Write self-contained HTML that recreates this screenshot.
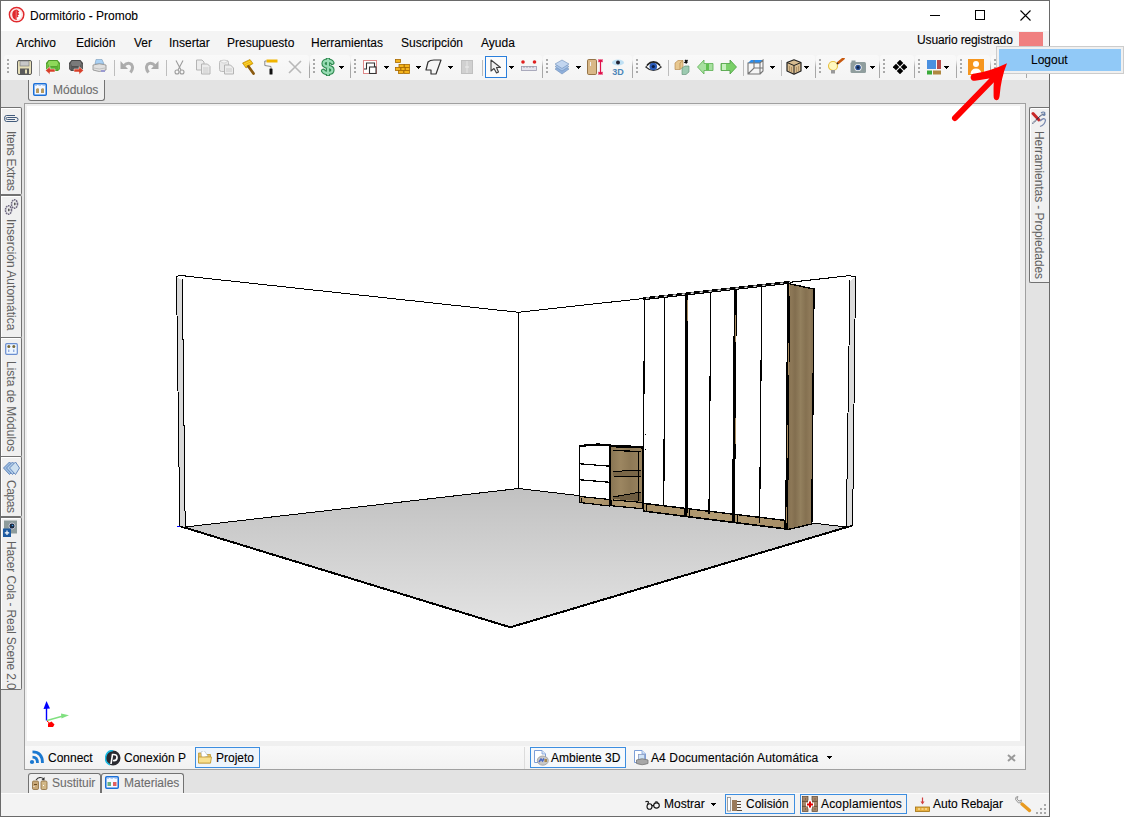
<!DOCTYPE html>
<html><head><meta charset="utf-8">
<style>
*{margin:0;padding:0;box-sizing:border-box}
html,body{width:1126px;height:832px;overflow:hidden;background:#fff;font-family:"Liberation Sans",sans-serif;font-size:12px;color:#000;position:relative}
.a{position:absolute}
.t{position:absolute;white-space:nowrap;line-height:14px;-webkit-text-stroke:0.1px currentColor}
.tb{position:absolute;top:55px;height:23px;background:linear-gradient(#f9f9f9,#f4f4f4);border-radius:3px}
.tbs{position:absolute;top:60px;width:1px;height:18px;background:linear-gradient(rgba(170,170,170,0),#a8a8a8 40%,#a8a8a8)}
.grip{position:absolute;top:59px;width:2px;height:15px;background:repeating-linear-gradient(#a9a9a9 0 2px,transparent 2px 4px)}
.sep{position:absolute;top:60px;width:1px;height:16px;background:#bdbdbd}
.dd{position:absolute;top:66px;width:5px;height:3px;background:linear-gradient(#000,#000) 0 0/5px 1px no-repeat,linear-gradient(#000,#000) 1px 1px/3px 1px no-repeat,linear-gradient(#000,#000) 2px 2px/1px 1px no-repeat}
.ic{position:absolute;top:59px;width:16px;height:16px;overflow:visible}
.ltab{position:absolute;left:1px;width:21px;background:#f0f0f0;border:1px solid #727272;border-left:none;border-radius:0 2px 2px 0;box-shadow:inset 1px 1px 0 #fff}
.vt{position:absolute;white-space:nowrap;transform-origin:0 0;transform:rotate(90deg);color:#606060;line-height:14px}
</style></head><body>
<!-- window background -->
<div class="a" style="left:0;top:0;width:1050px;height:817px;background:#e3e3e3"></div>
<!-- title bar -->
<div class="a" style="left:1px;top:1px;width:1048px;height:30px;background:#fff"></div>
<!-- menu + toolbar strip -->
<div class="a" style="left:1px;top:31px;width:1048px;height:49px;background:#f4f4f4"></div>
<!-- window border -->
<div class="a" style="left:0;top:0;width:1050px;height:817px;border:1px solid #6a6a6a"></div>

<!-- title -->
<svg class="a" style="left:8px;top:6px" width="18" height="18" viewBox="0 0 18 18">
  <circle cx="8.6" cy="8.6" r="7.2" fill="none" stroke="#e0282c" stroke-width="1.5"/>
  <circle cx="8.6" cy="8.6" r="5.6" fill="none" stroke="#f4b0b0" stroke-width="0.5"/>
  <path d="M8.8 3.6 Q4.2 3.8 4.2 8.8 Q4.4 13.6 8.8 14 L8.8 11.6 L10.6 10.8 L9.6 9.4 L11.4 8.2 L10 6.8 L11.4 5.4 Z" fill="#e0282c"/>
  <path d="M8.2 4.5 L8.2 13" stroke="#f8d0d0" stroke-width="0.5"/>
</svg>
<div class="t" style="left:30px;top:9px">Dormitório - Promob</div>
<div class="a" style="left:930px;top:15px;width:10px;height:1px;background:#000"></div>
<div class="a" style="left:975px;top:10px;width:10px;height:10px;border:1px solid #000"></div>
<svg class="a" style="left:1020px;top:10px" width="11" height="11" viewBox="0 0 11 11"><path d="M0.5 0.5L10.5 10.5M10.5 0.5L0.5 10.5" stroke="#000" stroke-width="1.1"/></svg>

<!-- menu -->
<div class="t" style="left:16px;top:36px">Archivo</div>
<div class="t" style="left:76px;top:36px">Edición</div>
<div class="t" style="left:134px;top:36px">Ver</div>
<div class="t" style="left:169px;top:36px">Insertar</div>
<div class="t" style="left:227px;top:36px">Presupuesto</div>
<div class="t" style="left:311px;top:36px">Herramientas</div>
<div class="t" style="left:401px;top:36px">Suscripción</div>
<div class="t" style="left:481px;top:36px">Ayuda</div>
<div class="t" style="left:917px;top:33px;letter-spacing:-0.13px">Usuario registrado</div>
<div class="a" style="left:1019px;top:32px;width:24px;height:14px;background:#f08080"></div>

<!-- TOOLBARS -->
<div id="toolbars">
<div class="tb" style="left:4px;width:305px"></div>
<div class="tbs" style="left:309px"></div>
<div class="grip" style="left:7px"></div>
<div class="tb" style="left:310px;width:40px"></div>
<div class="tbs" style="left:350px"></div>
<div class="grip" style="left:313px"></div>
<div class="tb" style="left:351px;width:191px"></div>
<div class="tbs" style="left:542px"></div>
<div class="grip" style="left:354px"></div>
<div class="tb" style="left:543px;width:89px"></div>
<div class="tbs" style="left:632px"></div>
<div class="grip" style="left:546px"></div>
<div class="tb" style="left:633px;width:182px"></div>
<div class="tbs" style="left:815px"></div>
<div class="grip" style="left:636px"></div>
<div class="tb" style="left:816px;width:63px"></div>
<div class="tbs" style="left:879px"></div>
<div class="grip" style="left:819px"></div>
<div class="tb" style="left:880px;width:34px"></div>
<div class="tbs" style="left:914px"></div>
<div class="grip" style="left:883px"></div>
<div class="tb" style="left:915px;width:41px"></div>
<div class="tbs" style="left:956px"></div>
<div class="grip" style="left:918px"></div>
<div class="tb" style="left:957px;width:33px"></div>
<div class="tbs" style="left:990px"></div>
<div class="grip" style="left:960px"></div>
<div class="tb" style="left:991px;width:35px"></div>
<div class="tbs" style="left:1026px"></div>
<div class="grip" style="left:994px"></div>
<div class="sep" style="left:39px"></div>
<div class="sep" style="left:114px"></div>
<div class="sep" style="left:166px"></div>
<div class="sep" style="left:482px"></div>
<div class="sep" style="left:668px"></div>
<div class="sep" style="left:743px"></div>
<div class="sep" style="left:781px"></div>
<div class="dd" style="left:339px"></div>
<div class="dd" style="left:384px"></div>
<div class="dd" style="left:416px"></div>
<div class="dd" style="left:448px"></div>
<div class="dd" style="left:509px"></div>
<div class="dd" style="left:576px"></div>
<div class="dd" style="left:770px"></div>
<div class="dd" style="left:804px"></div>
<div class="dd" style="left:870px"></div>
<div class="dd" style="left:944px"></div>
<div class="a" style="left:485px;top:56px;width:22px;height:22px;border:1px solid #2a7fdc;background:#fbfbfb"></div>
<svg class="a" style="left:17px;top:60px" width="15" height="15" viewBox="0 0 15 15"><rect x="0.5" y="0.5" width="14" height="14" rx="1.5" fill="#e6dfb8" stroke="#5b5b5b"/><rect x="3" y="1" width="9" height="5" fill="#c8c8c8" stroke="#777" stroke-width="0.6"/><rect x="3" y="8.5" width="9" height="6" fill="#5a5a5a"/><rect x="8" y="9.5" width="2" height="4" fill="#e6dfb8"/></svg>
<svg class="a" style="left:45px;top:59px" width="16" height="16" viewBox="0 0 16 16"><path d="M3.5 1 L12.5 1 L15 4 L15 10 L13 12 L3 12 L1 10 L1 4 Z" fill="#4f9a2a"/><path d="M4 2 L12 2 L13.5 4.5 L12 7 L4 7 L2.5 4.5 Z" fill="#8ed85a"/><path d="M1.5 5 L3.5 5 L3.5 11 L1.5 10 Z M12.5 5 L14.5 5 L14.5 10 L12.5 11 Z" fill="#6cc040"/><rect x="4" y="7.5" width="8" height="3.5" fill="#5cb034"/><path d="M0.5 11.5 L5 7.5 L5 10 L10 10 L10 13 L5 13 L5 15.5 Z" fill="#d8402a" stroke="#fff" stroke-width="0.5"/></svg>
<svg class="a" style="left:68px;top:59px" width="16" height="16" viewBox="0 0 16 16"><path d="M3.5 1 L12.5 1 L15 4 L15 10 L13 12 L3 12 L1 10 L1 4 Z" fill="#4a4a4a"/><path d="M4 2 L12 2 L13.5 4.5 L12 7 L4 7 L2.5 4.5 Z" fill="#7a7a7a"/><path d="M1.5 5 L3.5 5 L3.5 11 L1.5 10 Z M12.5 5 L14.5 5 L14.5 10 L12.5 11 Z" fill="#666"/><rect x="4" y="7.5" width="8" height="3.5" fill="#595959"/><path d="M15.5 11.5 L11 7.5 L11 10 L6 10 L6 13 L11 13 L11 15.5 Z" fill="#d8402a" stroke="#fff" stroke-width="0.5"/></svg>
<svg class="a" style="left:92px;top:59px" width="15" height="16" viewBox="0 0 15 16"><path d="M4 0.5 L10 0.5 L12 5 L3 5 Z" fill="#a9d1f5" stroke="#7a9ab8" stroke-width="0.6"/><path d="M1 6 Q7 3.5 14 6 L14 11 Q7 14 1 11 Z" fill="#e0e0e0" stroke="#8c8c8c" stroke-width="0.8"/><path d="M2 9 Q7 11 13 9" stroke="#aaa" stroke-width="0.6" fill="none"/><rect x="9" y="11" width="4" height="2" fill="#9a9ad0"/></svg>
<svg class="a" style="left:120px;top:59px" width="15" height="16" viewBox="0 0 15 16"><path d="M0.5 2 L0.5 10 L8 10 Z" fill="#a9a9a9"/><path d="M3.5 7 Q8 2.5 11.5 5.5 Q14 9 10.5 13.5" fill="none" stroke="#aeaeae" stroke-width="3"/></svg>
<svg class="a" style="left:143px;top:59px" width="16" height="16" viewBox="0 0 16 16"><path d="M15.5 2 L15.5 10 L8 10 Z" fill="#a9a9a9"/><path d="M12.5 7 Q8 2.5 4.5 5.5 Q2 9 5.5 13.5" fill="none" stroke="#aeaeae" stroke-width="3"/></svg>
<svg class="a" style="left:174px;top:60px" width="11" height="15" viewBox="0 0 11 15"><path d="M2 0.5 L7 10 M9 0.5 L4 10" stroke="#9c9c9c" stroke-width="1.1"/><circle cx="3" cy="12" r="2" fill="none" stroke="#9c9c9c" stroke-width="1.1"/><circle cx="8" cy="12" r="2" fill="none" stroke="#9c9c9c" stroke-width="1.1"/></svg>
<svg class="a" style="left:196px;top:59px" width="15" height="16" viewBox="0 0 15 16"><path d="M0.5 1 L6 1 L8 3 L8 11 L0.5 11 Z" fill="#ececec" stroke="#b4b4b4"/><path d="M5.5 5 L11.5 5 L14 7.5 L14 15 L5.5 15 Z" fill="#ececec" stroke="#b4b4b4"/><path d="M7 9 L12.5 9 M7 11 L12.5 11 M7 13 L12.5 13" stroke="#c4c4c4" stroke-width="0.8"/></svg>
<svg class="a" style="left:219px;top:59px" width="16" height="16" viewBox="0 0 16 16"><rect x="0.5" y="1.5" width="9" height="11" rx="2" fill="#e8e8e8" stroke="#bdbdbd"/><ellipse cx="5" cy="2.5" rx="3" ry="1.5" fill="#f4f4f4" stroke="#c4c4c4" stroke-width="0.6"/><path d="M5.5 6 L11.5 6 L14.5 9 L14.5 15 L5.5 15 Z" fill="#ececec" stroke="#b4b4b4"/><path d="M7 10 L13 10 M7 12 L13 12" stroke="#c4c4c4" stroke-width="0.8"/></svg>
<svg class="a" style="left:242px;top:59px" width="14" height="16" viewBox="0 0 14 16"><path d="M0.5 4 L8 0.5 L11 4.5 L4 9 Z" fill="#f0b800" stroke="#b08000" stroke-width="0.6"/><path d="M2 5 L8.5 2 M3 6.5 L9.5 3.5" stroke="#fde070" stroke-width="0.6"/><path d="M6.5 7.5 L11.5 14.5" stroke="#8a5a10" stroke-width="2.8" stroke-linecap="round"/></svg>
<svg class="a" style="left:264px;top:59px" width="14" height="16" viewBox="0 0 14 16"><rect x="2.5" y="0.5" width="11" height="3" fill="#f0b400"/><path d="M2.5 2 L0.8 2 L0.8 6.5 L7 7.5 L7 9.5" fill="none" stroke="#707070" stroke-width="0.8"/><rect x="5.5" y="9.5" width="3" height="6" rx="0.6" fill="#111"/></svg>
<svg class="a" style="left:288px;top:60px" width="14" height="14" viewBox="0 0 14 14"><path d="M1 1 L13 13 M13 1 L1 13" stroke="#b8b8b8" stroke-width="1.6"/></svg>
<svg class="a" style="left:320px;top:58px" width="16" height="18" viewBox="0 0 16 18"><g fill="none" stroke-linecap="round"><path d="M12.3,4.8 Q11,2.6 8,2.6 Q3.6,2.6 3.6,5.6 Q3.6,8.2 8,8.8 Q12.4,9.4 12.4,12 Q12.4,15 8,15 Q4.6,15 3.2,12.8 M8,1 L8,16.8" stroke="#2f8a50" stroke-width="4.4"/><path d="M12.3,4.8 Q11,2.6 8,2.6 Q3.6,2.6 3.6,5.6 Q3.6,8.2 8,8.8 Q12.4,9.4 12.4,12 Q12.4,15 8,15 Q4.6,15 3.2,12.8 M8,1.5 L8,16.3" stroke="#98dcb4" stroke-width="2.2"/></g></svg>
<svg class="a" style="left:363px;top:60px" width="14" height="14" viewBox="0 0 14 14"><rect x="0.5" y="0.5" width="13" height="13" fill="#fff" stroke="#e08a8a"/><path d="M1 9 L3.5 9 L3.5 3 L11.5 3 L11.5 7 L13 7" fill="none" stroke="#333" stroke-width="1.1"/><rect x="6.5" y="7" width="6.5" height="6.5" fill="#fff" stroke="#333" stroke-width="1.1"/></svg>
<svg class="a" style="left:395px;top:59px" width="15" height="16" viewBox="0 0 15 16"><g fill="#f4b41c" stroke="#a86a00" stroke-width="0.8"><rect x="0.5" y="0.5" width="5" height="3"/><rect x="4" y="5.5" width="5" height="3"/><rect x="9.5" y="5.5" width="5" height="3"/><rect x="0.5" y="8.5" width="5" height="3"/><rect x="6" y="8.5" width="4" height="3"/><rect x="10.5" y="8.5" width="4" height="3"/><rect x="3.5" y="11.5" width="5" height="3"/><rect x="9" y="11.5" width="5.5" height="3"/></g></svg>
<svg class="a" style="left:425px;top:59px" width="17" height="16" viewBox="0 0 17 16"><path d="M3 3 Q5 1 9 1 L16 1 L11 15 L6 15 L6 11 L1 11 Z" fill="#f5f5f5" stroke="#333" stroke-width="1.2" stroke-linejoin="round"/></svg>
<svg class="a" style="left:461px;top:60px" width="12" height="14" viewBox="0 0 12 14"><rect x="0.5" y="0.5" width="11" height="13" fill="#d0d0d0" stroke="#c0c0c0"/><path d="M6 1 L6 13" stroke="#e6e6e6"/><path d="M5 6 L5 8 M7 6 L7 8" stroke="#ededed"/></svg>
<svg class="a" style="left:490px;top:59px" width="12" height="15" viewBox="0 0 12 15"><path d="M1 1 L1 12 L4 9.5 L6.5 14 L8.5 13 L6.5 8.5 L10.5 8.5 Z" fill="#f0f0f0" stroke="#404040" stroke-width="1.1" stroke-linejoin="round"/></svg>
<svg class="a" style="left:521px;top:59px" width="16" height="13" viewBox="0 0 16 13"><circle cx="2" cy="3" r="1.8" fill="#e02020"/><circle cx="13.5" cy="3" r="1.8" fill="#e02020"/><rect x="0.5" y="7.5" width="15" height="4" fill="#e4e4ee" stroke="#9a9aae" stroke-width="0.8"/><path d="M3 7.5 L3 9 M6 7.5 L6 9 M9 7.5 L9 9 M12 7.5 L12 9" stroke="#777" stroke-width="0.6"/></svg>
<svg class="a" style="left:554px;top:59px" width="16" height="16" viewBox="0 0 16 16"><g stroke="#6f8fb8" stroke-width="0.6"><path d="M8 6 L15 10 L8 15 L1 10 Z" fill="#8fb0dc"/><path d="M8 3.5 L15 7.5 L8 12 L1 7.5 Z" fill="#a8c4e8"/><path d="M8 1 L15 5 L8 9.5 L1 5 Z" fill="#c2d6f0"/></g></svg>
<svg class="a" style="left:587px;top:59px" width="17" height="16" viewBox="0 0 17 16"><rect x="0.5" y="0.5" width="9" height="15" rx="1.2" fill="#d9b887" stroke="#8c6a3a" stroke-width="0.9"/><rect x="3" y="3" width="1" height="4" fill="#f0f0f0"/><path d="M13.5 1 L13.5 15 M11 1 L16 1 M11 15 L16 15 M11.5 3 L13.5 1 L15.5 3 M11.5 13 L13.5 15 L15.5 13" stroke="#e0104a" stroke-width="1.2" fill="none"/></svg>
<svg class="a" style="left:611px;top:59px" width="14" height="17" viewBox="0 0 14 17"><ellipse cx="7" cy="3.5" rx="6" ry="3" fill="#bfe0f4"/><circle cx="7" cy="3.5" r="2" fill="#223"/><text x="7" y="16" text-anchor="middle" font-family="Liberation Sans" font-weight="bold" font-size="9" fill="#4a86b8">3D</text></svg>
<svg class="a" style="left:645px;top:60px" width="17" height="14" viewBox="0 0 17 14"><path d="M0.8 7 Q8.5 -2 16.2 7 Q8.5 14 0.8 7 Z" fill="#fff" stroke="#333" stroke-width="1.1"/><circle cx="8.3" cy="6.5" r="3.8" fill="#2a5bb8"/><circle cx="8.3" cy="6.5" r="1.6" fill="#0a1a40"/><path d="M2 5 Q8.5 -1.5 15 5" stroke="#222" stroke-width="1.3" fill="none"/></svg>
<svg class="a" style="left:674px;top:59px" width="17" height="16" viewBox="0 0 17 16"><path d="M1 4 L4 1.5 L9 1.5 L9 8 L6 10.5 L1 10.5 Z" fill="#e8c890" stroke="#b08040" stroke-width="0.6"/><path d="M6 10.5 L6 4 L9 1.5" fill="none" stroke="#b08040" stroke-width="0.6"/><path d="M8 9 L11 7 L15 7 L15 13 L12 15.5 L8 15.5 Z" fill="#9ccab0" stroke="#5a8a70" stroke-width="0.6"/><path d="M11 1 L13.5 3.5 M13.5 1 L11 3.5 L13 4" stroke="#111" stroke-width="1.3"/></svg>
<svg class="a" style="left:697px;top:59px" width="17" height="16" viewBox="0 0 17 16"><path d="M0.5 8 L7 1 L7 4.5 L16 4.5 L16 11.5 L7 11.5 L7 15 Z" fill="#a8e0a0" stroke="#5ab050" stroke-width="0.8" stroke-linejoin="round"/><rect x="9" y="5" width="3" height="6" fill="#60c050"/></svg>
<svg class="a" style="left:720px;top:59px" width="17" height="16" viewBox="0 0 17 16"><path d="M16.5 8 L10 1 L10 4.5 L1 4.5 L1 11.5 L10 11.5 L10 15 Z" fill="#7ad068" stroke="#4aa040" stroke-width="0.8" stroke-linejoin="round"/><rect x="2" y="5" width="4" height="6" fill="#c8f0c0"/></svg>
<svg class="a" style="left:747px;top:59px" width="17" height="16" viewBox="0 0 17 16"><path d="M4 1 L16 1 L13 4 L1 4 Z" fill="#2a8ef0"/><path d="M1 4 L13 4 L13 15 L1 15 Z M13 4 L16 1 L16 12 L13 15 M1 15 L7 9 L16 9 M7 9 L7 1" fill="none" stroke="#777" stroke-width="1.1"/></svg>
<svg class="a" style="left:786px;top:59px" width="16" height="16" viewBox="0 0 16 16"><path d="M8 0.8 L15 3.5 L15 12 L8 15.2 L1 12 L1 3.5 Z" fill="#d8bc90" stroke="#222" stroke-width="1.2" stroke-linejoin="round"/><path d="M1 3.5 L8 6.5 L15 3.5 M8 6.5 L8 15" stroke="#222" stroke-width="1" fill="none"/><path d="M3.5 7 L3.5 12 M5.5 8 L5.5 13 M10.5 8 L10.5 13 M12.5 7 L12.5 12" stroke="#a8895c" stroke-width="0.8"/></svg>
<svg class="a" style="left:827px;top:58px" width="18" height="17" viewBox="0 0 18 17"><circle cx="6" cy="8" r="4.5" fill="#fff8c0" stroke="#e6c040" stroke-width="1.1"/><rect x="4" y="12" width="4" height="3.5" fill="#999"/><path d="M11 5 L16.5 0.5" stroke="#c85a10" stroke-width="2.6" stroke-linecap="round"/><path d="M10 6 L11 5" stroke="#222" stroke-width="1.5"/></svg>
<svg class="a" style="left:850px;top:60px" width="16" height="13" viewBox="0 0 16 13"><rect x="0.5" y="2" width="15.5" height="11" rx="1.5" fill="#909e9e"/><rect x="1.5" y="0.5" width="4" height="2" fill="#909e9e"/><circle cx="8" cy="7.5" r="3.6" fill="#fff"/><circle cx="8" cy="7.5" r="2.8" fill="#2a5090"/><circle cx="8" cy="7.5" r="1.2" fill="#102040"/></svg>
<svg class="a" style="left:893px;top:60px" width="14" height="14" viewBox="0 0 14 14"><g fill="#000"><rect x="4.7" y="0.7" width="4.6" height="4.6" transform="rotate(45 7 3)"/><rect x="4.7" y="8.7" width="4.6" height="4.6" transform="rotate(45 7 11)"/><rect x="0.7" y="4.7" width="4.6" height="4.6" transform="rotate(45 3 7)"/><rect x="8.7" y="4.7" width="4.6" height="4.6" transform="rotate(45 11 7)"/></g></svg>
<svg class="a" style="left:927px;top:60px" width="15" height="15" viewBox="0 0 15 15"><rect x="0" y="0" width="9" height="9" fill="#4a90e0"/><rect x="10" y="0" width="4" height="9" fill="#b84a4a"/><rect x="0" y="10.5" width="5" height="4" fill="#3aaa3a"/><rect x="6" y="10.5" width="8" height="4" fill="#b08840"/></svg>
<svg class="a" style="left:968px;top:59px" width="16" height="16" viewBox="0 0 16 16"><rect x="0" y="0" width="16" height="16" fill="#f6961e"/><circle cx="8" cy="5" r="3" fill="#fff"/><path d="M2.5 15 Q3 9.5 8 9.5 Q13 9.5 13.5 15 Z" fill="#fff"/></svg>

</div>

<!-- Modulos tab -->
<div class="a" style="left:28px;top:80px;width:77px;height:21px;background:#f0f0f0;border:1px solid #727272;border-top:none;border-radius:0 0 3px 3px"></div>
<div class="t" style="left:53px;top:83px;color:#6d6d6d">Módulos</div>

<!-- viewport frame -->
<div class="a" style="left:24px;top:103px;width:1002px;height:667px;border:1px solid #a0a0a0;background:#f0f0f0"></div>
<div class="a" style="left:27px;top:106px;width:993px;height:635px;background:#fff"></div>
<div class="a" style="left:25px;top:746px;width:1000px;height:23px;background:linear-gradient(#f9f9f9,#f2f2f2)"></div>


<!-- 3D SCENE -->
<svg class="a" style="left:0;top:0" width="1126" height="832" viewBox="0 0 1126 832" shape-rendering="crispEdges">
<defs>
<linearGradient id="flg" x1="0" y1="488" x2="0" y2="627" gradientUnits="userSpaceOnUse">
<stop offset="0" stop-color="#c1c1c1"/><stop offset="1" stop-color="#e3e3e3"/></linearGradient>
<linearGradient id="wood" x1="0" y1="0" x2="1" y2="0">
<stop offset="0" stop-color="#7c694b"/><stop offset="0.15" stop-color="#8d7857"/><stop offset="0.3" stop-color="#826e4f"/>
<stop offset="0.5" stop-color="#93805e"/><stop offset="0.7" stop-color="#857151"/><stop offset="0.85" stop-color="#8f7a59"/><stop offset="1" stop-color="#7e6b4d"/></linearGradient>
<linearGradient id="wood2" x1="0" y1="0" x2="1" y2="0">
<stop offset="0" stop-color="#a88f66"/><stop offset="0.5" stop-color="#b39c73"/><stop offset="1" stop-color="#a68d66"/></linearGradient>
<linearGradient id="wood3" x1="0" y1="0" x2="1" y2="0">
<stop offset="0" stop-color="#8a7654"/><stop offset="0.3" stop-color="#9c8661"/><stop offset="0.6" stop-color="#8e7956"/><stop offset="1" stop-color="#9a845f"/></linearGradient>
</defs>
<polygon points="183,527 518.4,488.4 849,527 510.3,627.1" fill="url(#flg)"/>
<path d="M179.5,526 L510.3,627.3 L853,525.3" fill="none" stroke="#000" stroke-width="2"/>
<path d="M185,527 L518.5,488.5 L846,527" fill="none" stroke="#000" stroke-width="1"/>
<polygon points="176.5,277 182,280 185,527 180,526" fill="#d9d9d9"/>
<path d="M176.5,277 L179.8,526" stroke="#000" stroke-width="1"/>
<path d="M182.3,279.5 L185.2,527" stroke="#000" stroke-width="1"/>
<path d="M176.5,277 L178.5,275.5 L186,275.5" fill="none" stroke="#000" stroke-width="1"/>
<path d="M180,275.5 L518.5,312.3 L851,275.5" fill="none" stroke="#000" stroke-width="1"/>
<path d="M518.5,312 L518.5,488.5" stroke="#000" stroke-width="1"/>
<polygon points="850,281 855.5,277 852.6,525.5 846.3,527" fill="#dcdcdc"/>
<path d="M850,280 L846.3,527" stroke="#000" stroke-width="1"/>
<path d="M855.5,277 L852.6,525.5" stroke="#000" stroke-width="1"/>
<path d="M849,275.5 L855.5,277" fill="none" stroke="#000" stroke-width="1"/>
<path d="M846.3,527 L852.6,525.5" stroke="#000" stroke-width="1"/>
<polygon points="789,283.5 814,289 811.8,524 787,529" fill="url(#wood)"/>
<path d="M790,284 L814,289 L811.8,524 L788,529.5" fill="none" stroke="#000" stroke-width="1.4"/>
<polygon points="644.5,299 788.7,283 786.6,520.5 643,503" fill="#fff"/>
<polygon points="643,503 786.6,520.4 786.6,529 643,510.8" fill="url(#wood2)"/>
<path d="M643,503.3 L787,520.6" fill="none" stroke="#000" stroke-width="1.4"/>
<path d="M643,511 L788,529.2" fill="none" stroke="#000" stroke-width="1.6"/>
<path d="M646.5,504 L646.5,511" stroke="#000" stroke-width="1"/>
<path d="M689.5,509 L689.5,516" stroke="#000" stroke-width="1"/>
<path d="M684.5,508 L684.5,515" stroke="#000" stroke-width="1"/>
<path d="M732,514 L732,521" stroke="#000" stroke-width="1"/>
<path d="M737.5,515 L737.5,522" stroke="#000" stroke-width="1"/>
<path d="M784.5,520 L784.5,528" stroke="#000" stroke-width="1"/>
<path d="M644.5,299 L643.2,511" stroke="#000" stroke-width="1.2"/>
<path d="M664.8,297.6 L663.8,506" stroke="#000" stroke-width="1.2"/>
<path d="M710.8,293 L709,514" stroke="#000" stroke-width="1.2"/>
<path d="M761.8,287.3 L759.6,523" stroke="#000" stroke-width="1.2"/>
<path d="M687,295 L686,516" stroke="#000" stroke-width="3"/>
<path d="M735.4,289 L733.5,522" stroke="#000" stroke-width="3"/>
<path d="M788.7,283 L786.6,529" stroke="#000" stroke-width="3"/>
<path d="M687.5,300 L687.5,321" stroke="#a88c62" stroke-width="1"/>
<path d="M735.5,315 L735.5,342" stroke="#a88c62" stroke-width="1"/>
<path d="M735.3,418 L735.3,444" stroke="#a88c62" stroke-width="1"/>
<path d="M789.5,284 L789.5,296" stroke="#a88c62" stroke-width="1"/>
<path d="M788.3,343 L788.3,375" stroke="#a88c62" stroke-width="1"/>
<path d="M787.6,425 L787.6,458" stroke="#a88c62" stroke-width="1"/>
<path d="M786.9,507 L786.9,523" stroke="#a88c62" stroke-width="1"/>
<path d="M643,298.8 L790,282.3" stroke="#000" stroke-width="3"/>
<path d="M646,298.3 L790,282.3" stroke="#fff" stroke-width="1.3" stroke-dasharray="3 6" shape-rendering="auto"/>
<path d="M790,282.3 L851,275.5" stroke="#000" stroke-width="1"/>
<rect x="645" y="449" width="1" height="1" fill="#000"/><rect x="645" y="434" width="1" height="1" fill="#000"/>
<polygon points="579.5,446 610,445 610,499 579.5,496.5" fill="#fff"/>
<polygon points="613,447.5 641,448.5 641,451 613,450.5" fill="#b8a078"/>
<polygon points="579.5,496.5 610,499.5 610,505.7 579.5,502.3" fill="url(#wood2)"/>
<path d="M579.5,446 L579.5,502.5 L610,506" fill="none" stroke="#000" stroke-width="1.2"/>
<path d="M579.5,496.5 L610,499.5 M580,463.8 L610,466.2 M580,479.8 L610,482.3" fill="none" stroke="#000" stroke-width="1.2"/>
<path d="M579,446 L597,444.5 L611,445" fill="none" stroke="#000" stroke-width="2.2"/>
<path d="M581.5,498 L581.5,503" stroke="#000" stroke-width="1"/>
<path d="M610.5,445 L610.5,506" stroke="#000" stroke-width="2.8"/>
<polygon points="611,446 643,447 643,503 611,500" fill="url(#wood3)"/>
<polygon points="612,499 643,502 643,508.5 612,505.5" fill="url(#wood2)"/>
<path d="M611,446 L643,447.3" stroke="#000" stroke-width="2.6"/>
<path d="M613,450.5 L641,451.5" stroke="#000" stroke-width="1.2"/>
<polygon points="613,472 641,470 641,476 613,476" fill="#7a6748"/>
<path d="M613,471.5 L641,470" stroke="#000" stroke-width="1"/>
<path d="M613,476 L641,476.5" stroke="#000" stroke-width="1"/>
<polygon points="613,497 641,492 641,501 613,499" fill="#6e5c40"/>
<path d="M613,497 L641,492" stroke="#000" stroke-width="1"/>
<path d="M613,500 L643,502.5" stroke="#000" stroke-width="1.2"/>
<path d="M612,505.8 L643,508.8" stroke="#000" stroke-width="1.2"/>
<path d="M638.5,452 L638.5,501" stroke="#000" stroke-width="1.4"/>
<path d="M642.8,446 L642.8,509" stroke="#000" stroke-width="2.2"/>
<g shape-rendering="auto">
<path d="M46.5,720.5 L46.5,706" stroke="#0000ff" stroke-width="1.4"/>
<polygon points="46.5,701 50,708.5 43.5,709" fill="#0000ff"/>
<path d="M47,720.5 L63,716" stroke="#80e080" stroke-width="1.3"/>
<polygon points="61,713.5 69,715.2 61.5,718.5" fill="#80e080"/>
<path d="M47,721 L50.5,724" stroke="#ff0000" stroke-width="1"/>
<polygon points="48,723.5 51.5,721.5 54.5,724.5 53,727 48,727" fill="#ff0000"/>
</g>
<path d="M177,526.5 L180,526.5" stroke="#0000ff" stroke-width="1"/>
</svg>
<!-- /3D SCENE -->

<!-- left tabs -->
<div class="ltab" style="top:107px;height:88px"></div>
<div class="ltab" style="top:195px;height:143px"></div>
<div class="ltab" style="top:337px;height:120px"></div>
<div class="ltab" style="top:456px;height:61px"></div>
<div class="ltab" style="top:517px;height:173px"></div>
<div class="vt" style="left:18px;top:131px;letter-spacing:-0.3px">Itens Extras</div>
<div class="vt" style="left:18px;top:219px">Inserción Automática</div>
<div class="vt" style="left:18px;top:361px">Lista de Módulos</div>
<div class="vt" style="left:18px;top:480px;letter-spacing:-0.4px">Capas</div>
<div class="vt" style="left:18px;top:541px;letter-spacing:-0.16px">Hacer Cola - Real Scene 2.0</div>

<!-- right tab -->
<div class="a" style="left:1029px;top:107px;width:20px;height:176px;background:#f0f0f0;border:1px solid #727272;border-right:none;border-radius:2px 0 0 2px;box-shadow:inset 1px 1px 0 #fff"></div>
<div class="vt" style="left:1046px;top:131px;letter-spacing:-0.08px">Herramientas - Propiedades</div>

<!-- bottom tab bar -->
<div class="t" style="left:48px;top:751px">Connect</div>
<div class="t" style="left:124px;top:751px">Conexión P</div>
<div class="a" style="left:195px;top:747px;width:65px;height:21px;border:1px solid #3d8ee0;background:#eef5fc"></div>
<div class="t" style="left:216px;top:751px">Projeto</div>
<div class="a" style="left:524px;top:747px;width:1px;height:22px;background:#dcdcdc"></div>
<div class="a" style="left:530px;top:747px;width:96px;height:21px;border:1px solid #3d8ee0;background:#f6f9fc"></div>
<div class="t" style="left:551px;top:751px">Ambiente 3D</div>
<div class="t" style="left:651px;top:751px;letter-spacing:0.12px">A4 Documentación Automática</div>
<div class="dd" style="left:827px;top:756px"></div>

<!-- bottom tabs -->
<div class="a" style="left:28px;top:773px;width:73px;height:21px;background:#f0f0f0;border:1px solid #727272;border-bottom:none;border-radius:3px 3px 0 0"></div>
<div class="a" style="left:101px;top:773px;width:83px;height:21px;background:#f0f0f0;border:1px solid #727272;border-bottom:none;border-radius:3px 3px 0 0"></div>
<div class="t" style="left:52px;top:776px;color:#6d6d6d">Sustituir</div>
<div class="t" style="left:124px;top:776px;color:#6d6d6d">Materiales</div>

<!-- status bar -->
<div class="a" style="left:1px;top:793px;width:1048px;height:23px;background:#f3f3f3;border-top:1px solid #fbfbfb"></div>
<div class="t" style="left:664px;top:797px">Mostrar</div>
<div class="dd" style="left:711px;top:803px"></div>
<div class="a" style="left:725px;top:794px;width:70px;height:20px;border:1px solid #3d8ee0"></div>
<div class="t" style="left:746px;top:797px">Colisión</div>
<div class="a" style="left:800px;top:794px;width:107px;height:20px;border:1px solid #3d8ee0"></div>
<div class="t" style="left:821px;top:797px;letter-spacing:0.18px">Acoplamientos</div>
<div class="t" style="left:933px;top:797px">Auto Rebajar</div>

<!-- popup -->
<div class="a" style="left:996px;top:46px;width:128px;height:28px;background:#f0f0f0;border:1px solid #cccccc"></div>
<div class="a" style="left:999px;top:49px;width:122px;height:22px;background:#91c9f7"></div>
<div class="t" style="left:1031px;top:53px">Logout</div>

<!-- ICONS2 -->
<svg class="a" style="left:33px;top:83px" width="14" height="13" viewBox="0 0 14 13"><rect x="0.75" y="0.75" width="12.5" height="11.5" rx="1" fill="#f4f8ff" stroke="#1a6fd8" stroke-width="1.5"/><path d="M2 2.5 L4 2.5 M5.5 2.5 L8 2.5 M9.5 2.5 L12 2.5" stroke="#9cc0f0" stroke-width="0.8"/><path d="M3 6 L5 5 L6 6 L6 10 L3 10 Z" fill="#b89a60"/><path d="M8 6 L10 5 L11 6 L11 10 L8 10 Z" fill="#b89a60"/></svg>
<svg class="a" style="left:4px;top:114px" width="15" height="9" viewBox="0 0 15 9"><path d="M11,1.5 L2.5,1.5 Q0.5,1.5 0.5,4.5 Q0.5,7.5 2.5,7.5 L12,7.5 Q14,7.5 14,5.5 Q14,3.5 12,3.5 L3.5,3.5 Q2,3.5 2,4.5 Q2,5.5 3.5,5.5 L11,5.5" fill="none" stroke="#2e4a6e" stroke-width="0.9"/></svg>
<svg class="a" style="left:4px;top:198px" width="15" height="18" viewBox="0 0 15 18"><g fill="none" stroke="#6e6880" stroke-width="1.6" stroke-dasharray="1.6 0.7"><ellipse cx="4.5" cy="12" rx="3" ry="4.2"/><ellipse cx="10.5" cy="6" rx="3" ry="4.2"/></g><ellipse cx="4.8" cy="12" rx="0.9" ry="1.4" fill="#555"/><ellipse cx="10.8" cy="6" rx="0.9" ry="1.4" fill="#555"/></svg>
<svg class="a" style="left:5px;top:343px" width="13" height="12" viewBox="0 0 13 12"><rect x="0.7" y="0.7" width="11.6" height="10.6" rx="1" fill="#eef6ff" stroke="#6a8ed0" stroke-width="1.2"/><circle cx="3.8" cy="3.5" r="1.5" fill="#7a6a3a"/><circle cx="8.8" cy="3.5" r="1.5" fill="#7a6a3a"/><path d="M3.8 6.5 L3.8 9 M8.8 6.5 L8.8 9" stroke="#7090d0" stroke-width="1"/></svg>
<svg class="a" style="left:3px;top:461px" width="17" height="15" viewBox="0 0 17 15"><g stroke="#5a7fb8" stroke-width="0.9"><path d="M6.5 1 L12.5 7 L6.5 13.5 L0.5 7 Z" fill="#9cbde0"/><path d="M9.5 1 L15.5 7 L9.5 13.5 L3.5 7 Z" fill="#b2cde8"/><path d="M12.5 1 L16.5 7 L12.5 13.5 L6.5 7 Z" fill="#cde0f0"/></g></svg>
<svg class="a" style="left:3px;top:520px" width="16" height="18" viewBox="0 0 16 18"><rect x="1" y="0.5" width="13" height="13" fill="#8e9c9c"/><circle cx="9" cy="6" r="3" fill="#1a2a40" stroke="#dde" stroke-width="0.8"/><circle cx="9.5" cy="5.5" r="0.8" fill="#3aa0f0"/><rect x="0" y="8.5" width="8" height="8.5" fill="#1e5aa0"/><path d="M4 10.5 L4 15 M1.8 12.8 L6.2 12.8" stroke="#fff" stroke-width="1.2"/></svg>
<svg class="a" style="left:1031px;top:111px" width="16" height="17" viewBox="0 0 16 17"><path d="M2 2.5 L8 9" stroke="#c82828" stroke-width="3" stroke-linecap="round"/><path d="M1.5 12.5 L12 2.5" stroke="#1a2a50" stroke-width="1.1" stroke-dasharray="1 0.6"/><path d="M10 2 Q12.5 0 14 2 L12 4 Q14 5 14 3" fill="none" stroke="#6a80a8" stroke-width="1.2"/><path d="M9 10 Q13 6 14.5 9 Q14 14 9 15.5" fill="none" stroke="#7a8ab0" stroke-width="1.3"/></svg>
<svg class="a" style="left:29px;top:750px" width="15" height="15" viewBox="0 0 15 15"><circle cx="3" cy="12" r="2.1" fill="#1a78d0"/><path d="M3.5 7.2 Q8.5 7.2 8.5 13" fill="none" stroke="#1a78d0" stroke-width="2.8"/><path d="M3.5 1.8 Q13.5 1.8 13.5 13" fill="none" stroke="#1a78d0" stroke-width="2.8"/></svg>
<svg class="a" style="left:105px;top:750px" width="16" height="16" viewBox="0 0 16 16"><circle cx="8" cy="8" r="7.5" fill="#2a2a30"/><path d="M8 0.5 A7.5 7.5 0 0 0 5 14.8" fill="none" stroke="#18b8e0" stroke-width="1.6"/><path d="M6 14 L7.5 4.5 Q12.5 4 12 8 Q11.5 11 8 10.5" fill="none" stroke="#fff" stroke-width="1.6"/></svg>
<svg class="a" style="left:198px;top:751px" width="14" height="13" viewBox="0 0 14 13"><path d="M0.5 2 L5 2 L6 3.5 L12.5 3.5 L12.5 12 L0.5 12 Z" fill="#e6c060" stroke="#c09830" stroke-width="0.8"/><path d="M3 1 L6 -0.5 L10 5 L4 7 Z" fill="#fff" stroke="#9ab" stroke-width="0.5"/><path d="M0.5 6 L13.5 6 L12.5 12 L0.5 12 Z" fill="#f8e090" stroke="#c09830" stroke-width="0.8"/></svg>
<svg class="a" style="left:533px;top:749px" width="16" height="17" viewBox="0 0 16 17"><path d="M1.5 1.5 L9 1.5 L12.5 5 L12.5 13.5 L1.5 13.5 Z" fill="#fff" stroke="#7d9fd8" stroke-width="1"/><path d="M9 1.5 L9 5 L12.5 5" fill="#d8e8f8" stroke="#7d9fd8" stroke-width="0.8"/><ellipse cx="9.8" cy="11.6" rx="5.5" ry="4.6" fill="#c8c8c8" stroke="#9a9a9a" stroke-width="0.8"/><path d="M6 13 L8 10 L9.5 12 L11 9.5" fill="none" stroke="#4a6ac8" stroke-width="1.5"/><rect x="11.5" y="10" width="2.5" height="3" fill="#a88850"/></svg>
<svg class="a" style="left:633px;top:749px" width="16" height="17" viewBox="0 0 16 17"><path d="M1.5 1.5 L9 1.5 L12.5 5 L12.5 13.5 L1.5 13.5 Z" fill="#fff" stroke="#7d9fd8" stroke-width="1"/><path d="M9 1.5 L9 5 L12.5 5" fill="#d8e8f8" stroke="#7d9fd8" stroke-width="0.8"/><rect x="5.5" y="5.5" width="6" height="5" fill="#cfe4f8" stroke="#8a9ac0" stroke-width="0.8"/><path d="M3.5 11 Q9 8.5 15 11 L15 14.5 Q9 17 3.5 14.5 Z" fill="#a8a8a8" stroke="#777" stroke-width="0.8"/></svg>
<svg class="a" style="left:1007px;top:754px" width="9" height="8" viewBox="0 0 9 8"><path d="M1 1 L8 7 M8 1 L1 7" stroke="#999" stroke-width="2"/></svg>
<svg class="a" style="left:32px;top:776px" width="16" height="14" viewBox="0 0 16 14"><path d="M4 4 Q7.5 -0.5 12 3" fill="none" stroke="#333" stroke-width="1.1"/><path d="M12.5 1 L12.5 4.5 L9.5 4" fill="#333"/><rect x="0.5" y="5" width="6" height="8.5" rx="1.2" fill="#c8a878" stroke="#8a6a3a" stroke-width="0.8"/><rect x="9" y="5" width="6" height="8.5" rx="1.2" fill="#d2b888" stroke="#8a6a3a" stroke-width="0.8"/><rect x="2" y="8" width="3" height="1" fill="#6a4a20"/><rect x="1.5" y="10" width="1" height="1" fill="#fff"/><rect x="11" y="9" width="1" height="1" fill="#fff"/></svg>
<svg class="a" style="left:105px;top:776px" width="14" height="13" viewBox="0 0 14 13"><rect x="0.75" y="0.75" width="12.5" height="11.5" rx="1" fill="#f4f8ff" stroke="#1a6fd8" stroke-width="1.5"/><path d="M2 2.5 L4 2.5 M5.5 2.5 L8 2.5 M9.5 2.5 L12 2.5" stroke="#9cc0f0" stroke-width="0.8"/><rect x="2.5" y="6" width="3.5" height="4" fill="#6ab080"/><rect x="8" y="6" width="3.5" height="4" fill="#e06060"/></svg>
<svg class="a" style="left:645px;top:800px" width="16" height="10" viewBox="0 0 16 10"><path d="M0.5 2 Q2 0.5 3.5 2 L2.5 5" fill="none" stroke="#111" stroke-width="1.1"/><ellipse cx="4.5" cy="6.5" rx="2.5" ry="2.8" fill="none" stroke="#111" stroke-width="1.1"/><ellipse cx="11.5" cy="5.5" rx="2.8" ry="2.6" fill="none" stroke="#111" stroke-width="1.1"/><path d="M7 6 Q8 5 9 5.5 M13 2.5 Q11 1 10 2.5" fill="none" stroke="#111" stroke-width="1.1"/></svg>
<svg class="a" style="left:727px;top:797px" width="16" height="15" viewBox="0 0 16 15"><rect x="0.5" y="0.5" width="3" height="13.5" fill="#fff" stroke="#888" stroke-width="0.8"/><path d="M5 3 L10 3 L10 14 L5 14 Z" fill="#9a7a5a"/><path d="M10 4.5 L14 4.5 M10 7.5 L14 7.5 M10 10.5 L14 10.5 M10 13.5 L15 13.5" stroke="#5a4a3a" stroke-width="1"/></svg>
<svg class="a" style="left:802px;top:796px" width="16" height="16" viewBox="0 0 16 16"><g fill="#a48468" stroke="#5e4630" stroke-width="0.7"><rect x="0.5" y="0.5" width="5.5" height="4.7"/><rect x="0.5" y="5.5" width="5.5" height="4.7"/><rect x="0.5" y="10.5" width="5.5" height="5"/><rect x="10" y="0.5" width="5.5" height="4.7"/><rect x="10" y="5.5" width="5.5" height="4.7"/><rect x="10" y="10.5" width="5.5" height="5"/></g><g fill="#5e4630"><rect x="3" y="2.5" width="1" height="1"/><rect x="3" y="12.5" width="1" height="1"/><rect x="12.5" y="2.5" width="1" height="1"/><rect x="12.5" y="12.5" width="1" height="1"/></g><path d="M8 4.5 L8 12.5 M4 8.5 L12 8.5" stroke="#fff" stroke-width="4"/><path d="M8 5.5 L8 11.5 M5 8.5 L11 8.5" stroke="#e00000" stroke-width="2"/></svg>
<svg class="a" style="left:915px;top:797px" width="15" height="16" viewBox="0 0 15 16"><path d="M7.5 0.5 L7.5 6" stroke="#d04040" stroke-width="1.2"/><path d="M5.5 4.5 L7.5 7.5 L9.5 4.5" fill="#d04040"/><rect x="0.5" y="10" width="14" height="4.5" fill="#e8b040" stroke="#a07010" stroke-width="0.8"/><path d="M3 12 L5 12 M6.5 12 L8.5 12 M10 12 L12 12" stroke="#fff4c0" stroke-width="1"/></svg>
<svg class="a" style="left:1014px;top:796px" width="18" height="17" viewBox="0 0 18 17"><path d="M8 8 L15.5 14.5" stroke="#e89a20" stroke-width="3.4" stroke-linecap="round"/><path d="M1.5 3.5 Q1 0.5 4 0.5 L3 3 L5 5 L7.5 4 Q8 7.5 4.5 7 Z" fill="#e4e4e4" stroke="#888" stroke-width="0.8"/></svg>
<svg class="a" style="left:1036px;top:804px" width="11" height="10" viewBox="0 0 11 10"><g fill="#a8a8a8"><rect x="8" y="0" width="2" height="2"/><rect x="4" y="4" width="2" height="2"/><rect x="8" y="4" width="2" height="2"/><rect x="0" y="8" width="2" height="2"/><rect x="4" y="8" width="2" height="2"/><rect x="8" y="8" width="2" height="2"/></g></svg>
<svg class="a" style="left:940px;top:50px" width="80" height="80" viewBox="940 50 80 80">
<path d="M955,118 L993,79" stroke="#ff0000" stroke-width="6" stroke-linecap="round" fill="none"/>
<path d="M1007,63.3 Q1001,78 999.6,96 Q999,100.3 996.3,100.2 Q993.6,100 993.6,96 Q993.4,88 993.8,81 L989,78.5 Q981,79.8 975,80.8 Q970.6,80.9 970.6,77.2 Q970.8,73.9 975,73.6 Q991,71 1007,63.3 Z" fill="#ff0000"/>
</svg>

<!-- /ICONS2 -->
</body></html>
